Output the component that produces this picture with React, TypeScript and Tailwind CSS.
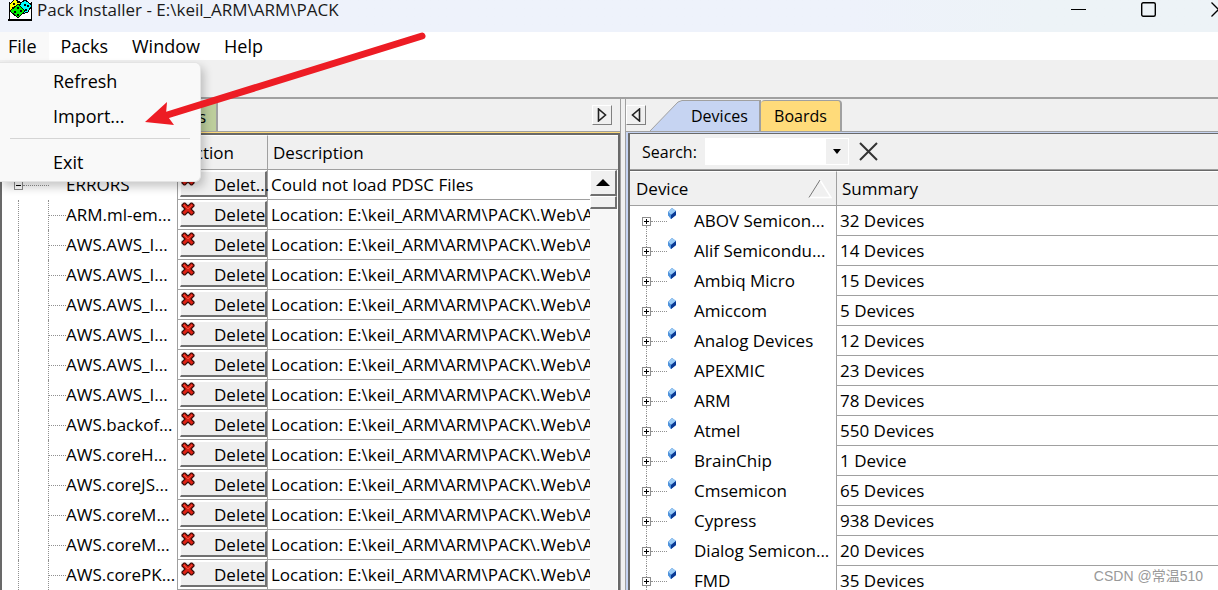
import { clsx } from "clsx";

const packs = [
  { name: "ARM.ml-em..." },
  { name: "AWS.AWS_I..." },
  { name: "AWS.AWS_I..." },
  { name: "AWS.AWS_I..." },
  { name: "AWS.AWS_I..." },
  { name: "AWS.AWS_I..." },
  { name: "AWS.AWS_I..." },
  { name: "AWS.backof..." },
  { name: "AWS.coreH..." },
  { name: "AWS.coreJS..." },
  { name: "AWS.coreM..." },
  { name: "AWS.coreM..." },
  { name: "AWS.corePK..." },
];

const devices = [
  { name: "ABOV Semicon...", summary: "32 Devices" },
  { name: "Alif Semicondu...", summary: "14 Devices" },
  { name: "Ambiq Micro", summary: "15 Devices" },
  { name: "Amiccom", summary: "5 Devices" },
  { name: "Analog Devices", summary: "12 Devices" },
  { name: "APEXMIC", summary: "23 Devices" },
  { name: "ARM", summary: "78 Devices" },
  { name: "Atmel", summary: "550 Devices" },
  { name: "BrainChip", summary: "1 Device" },
  { name: "Cmsemicon", summary: "65 Devices" },
  { name: "Cypress", summary: "938 Devices" },
  { name: "Dialog Semicon...", summary: "20 Devices" },
  { name: "FMD", summary: "35 Devices" },
];

function DiceIcon() {
  return (
    <svg width="24" height="21" viewBox="0 0 24 21" shapeRendering="crispEdges" aria-hidden="true">
      <path d="M1 2v17h22V2" fill="#fff" stroke="#000" />
      <path d="M0 19h24v2H0z" fill="#000" />
      <path d="M2 4 7-1l6 4-1 6-8 4-3-5z" fill="#ff0" stroke="#000" />
      <path d="M13 3 17 0l7 5-4 7-6 2-5-5z" fill="#0ff" stroke="#000" />
      <path d="M2 11 10 4l7 7-7 7z" fill="#0e0" stroke="#000" />
      <path
        d="M5 3h2v2H5zM9 1h2v2H9zM4 7h2v2H4zM16 4h2v2h-2zM19 5h2v2h-2zM17 9h2v2h-2zM9 7h2v2H9zM6 11h2v2H6zM12 10h2v2h-2zM9 14h2v2H9z"
        fill="#000"
      />
    </svg>
  );
}

function DeleteIcon() {
  return (
    <svg width="14" height="14" viewBox="0 0 14 14" className="shrink-0 self-start" aria-hidden="true">
      <path
        d="M1 3 3 1h1l3 3 3-3h1l2 2v1l-3 3 3 3v1l-2 2h-1l-3-3-3 3H3l-2-2v-1l3-3-3-3z"
        fill="#dd2114"
        stroke="#3a0d0a"
        strokeWidth="1.2"
      />
      <path d="m3 3 4 4 4-4" fill="none" stroke="#f4513e" strokeWidth="1" />
    </svg>
  );
}

function GemIcon() {
  return (
    <svg width="10" height="12" viewBox="0 0 10 12" className="-mt-[14px]" aria-hidden="true">
      <path d="M5 0 9 3v4l-5 4-3-4V4z" fill="#2f74c9" />
      <path d="M5 0 9 3 4 7 1 4z" fill="#9acbf6" />
      <path d="M1 4l3 3v4L1 7z" fill="#4f94dd" />
      <path d="M9 3v4l-5 4V7z" fill="#0b3a94" />
    </svg>
  );
}

function ExpandBox({ open = false }: { open?: boolean }) {
  return (
    <svg width="9" height="9" viewBox="0 0 9 9" shapeRendering="crispEdges" aria-hidden="true">
      <path d="M.5.5h8v8h-8z" fill="#fff" stroke="#8c8c8c" />
      <path d={open ? "M2 4.5h5" : "M2 4.5h5M4.5 2v5"} stroke="#000" />
    </svg>
  );
}

function ScrollTab({ dir }: { dir: "left" | "right" }) {
  return (
    <button
      type="button"
      aria-label={dir === "left" ? "Scroll tabs left" : "Scroll tabs right"}
      className="flex size-5 items-center justify-center border-t border-l border-r border-b border-t-white border-l-white border-r-[#808080] border-b-[#808080]"
    >
      <svg width="10" height="14" viewBox="0 0 10 14" fill="none" stroke="#222" strokeWidth="1.6">
        <path d={dir === "left" ? "M8.5 1v12L1.5 7z" : "M1.5 1v12L8.5 7z"} />
      </svg>
    </button>
  );
}

function DeleteButton({ label }: { label: string }) {
  return (
    <button
      type="button"
      className="flex h-[26px] w-full items-end gap-[19px] border-t border-r-2 border-b-2 border-l border-t-white border-l-white border-r-[#707070] border-b-[#707070] bg-[#efefef] leading-5"
    >
      <DeleteIcon />
      <span className="whitespace-nowrap">{label}</span>
    </button>
  );
}

function TitleBar() {
  return (
    <header className="flex h-8 shrink-0 items-start justify-between overflow-hidden bg-gradient-to-r from-[#eef2fb] from-70% to-[#edf3f7] to-85% pl-2">
      <div className="flex gap-[5px]">
        <DiceIcon />
        <h1 className="text-[17px] leading-5 whitespace-nowrap text-[#1a1a1a]">
          Pack Installer - E:\keil_ARM\ARM\PACK
        </h1>
      </div>
      <div className="-mr-2 flex gap-[55px] pt-0.5">
        <button type="button" aria-label="Minimize">
          <svg width="15" height="15" viewBox="0 0 15 15" stroke="#000">
            <path d="M0 7.5h15" />
          </svg>
        </button>
        <button type="button" aria-label="Maximize">
          <svg width="15" height="15" viewBox="0 0 15 15" fill="none" stroke="#000" strokeWidth="1.4">
            <rect x=".7" y=".7" width="13.6" height="13.6" rx="1.5" />
          </svg>
        </button>
        <button type="button" aria-label="Close">
          <svg width="15" height="15" viewBox="0 0 15 15" stroke="#000" strokeWidth="1.3">
            <path d="m.5.5 14 14M14.500.5l-14 14" />
          </svg>
        </button>
      </div>
    </header>
  );
}

function MenuBar() {
  return (
    <nav className="relative z-20 flex h-7 shrink-0 bg-white text-lg leading-7">
      <button type="button" aria-expanded="true" className="bg-[#f9f9f9] pr-3 pl-2">
        File
      </button>
      {["Packs", "Window", "Help"].map((item) => (
        <button type="button" key={item} className="px-3">
          {item}
        </button>
      ))}

      {/* File menu */}
      <div
        role="menu"
        className="absolute top-[30px] left-0 flex w-[201px] flex-col rounded-r-md border border-l-0 border-[#e4e4e4] bg-[#f9f9f9] pb-0.5 shadow-[3px_5px_10px_rgba(0,0,0,0.22)]"
      >
        <button type="button" role="menuitem" className="h-[35px] pl-[53px] text-left">
          Refresh
        </button>
        <button type="button" role="menuitem" className="h-[35px] pl-[53px] text-left">
          Import...
        </button>
        <hr className="mx-[10px] my-[5px] border-[#d5d5d5]" />
        <button type="button" role="menuitem" className="h-[35px] pl-[53px] text-left">
          Exit
        </button>
      </div>
    </nav>
  );
}

function PacksPane() {
  return (
    <section className="flex min-w-0 flex-col border-r border-[#a0a0a0]">
      <div className="flex h-8 shrink-0 items-end justify-between pr-2">
        <div className="flex text-base">
          <button type="button" aria-label="Packs" className="h-[29px] w-24 border-r-2 border-[#a0a0a0] bg-[#ffdb7a]" />
          <button type="button" className="h-[29px] w-[122px] border-r-2 border-[#a0a0a0] bg-[#bccd9c] pr-[10px] text-right">
            Examples
          </button>
        </div>
        <div className="self-center">
          <ScrollTab dir="right" />
        </div>
      </div>

      <div className="border-t border-[#a0a0a0]">
        <div className="h-px bg-[#ffdb7a]" />
      </div>
      <div className="relative min-h-0 flex-1 overflow-hidden border-t-2 border-r-2 border-l-2 border-[#696969] bg-white">
        <table className="w-full table-fixed border-separate border-spacing-0">
          <colgroup>
            <col className="w-[176px]" />
            <col className="w-[90px]" />
            <col />
          </colgroup>
          <thead>
            <tr className="h-[35px] bg-[#f0f0f0] text-left">
              <th className="border-t border-r border-b border-t-white border-r-[#a0a0a0] border-b-[#a0a0a0] pl-1 font-normal">Pack</th>
              <th className="border-t border-r border-b border-t-white border-r-[#a0a0a0] border-b-[#a0a0a0] pl-1.5 font-normal">Action</th>
              <th className="border-t border-b border-t-white border-b-[#a0a0a0] pl-[5px] font-normal">Description</th>
            </tr>
          </thead>
          <tbody>
            <tr className="h-[30px]">
              <td className="border-r border-[#a0a0a0] p-0">
                <div className="flex h-[29px] items-center pl-3">
                  <ExpandBox open />
                  <span className="w-[26px] border-t border-dotted border-[#909090]" />
                  <span className="pl-[17px]">ERRORS</span>
                </div>
              </td>
              <td className="border-r border-b border-[#a0a0a0] pt-px pr-0 pb-0 pl-0.5 align-top">
                <DeleteButton label="Delet..." />
              </td>
              <td className="border-b border-[#a0a0a0] py-0 pl-[3px] whitespace-nowrap">
                Could not load PDSC Files
              </td>
            </tr>
            {packs.map((pack, index) => (
              <tr key={index} className="h-[30px]">
                <td className="border-r border-[#a0a0a0] p-0">
                  <div className="flex h-[30px] items-center pl-4">
                    <span className="h-full w-[30px] border-l border-dotted border-[#909090]" />
                    <span className="h-full border-l border-dotted border-[#909090]" />
                    <span className="w-[17px] border-t border-dotted border-[#909090]" />
                    <span className="whitespace-nowrap">{pack.name}</span>
                  </div>
                </td>
                <td className="border-r border-b border-[#a0a0a0] pt-px pr-0 pb-0 pl-0.5 align-top">
                  <DeleteButton label="Delete" />
                </td>
                <td className="overflow-hidden border-b border-[#a0a0a0] py-0 pl-[3px] whitespace-nowrap">
                  Location: E:\keil_ARM\ARM\PACK\.Web\ARM
                </td>
              </tr>
            ))}
          </tbody>
        </table>

        {/* Scrollbar lies over the right end of the rows */}
        <div className="absolute top-[35px] right-0 bottom-0 flex w-7 flex-col border-r border-white bg-[#f7f7f7]">
          <button
            type="button"
            aria-label="Scroll up"
            className="flex h-[26px] items-center justify-center border-t border-r-2 border-b-2 border-l border-t-white border-l-white border-r-[#707070] border-b-[#707070] bg-[#f0f0f0]"
          >
            <svg width="14" height="7" viewBox="0 0 14 7">
              <path d="M7 0l7 7H0z" />
            </svg>
          </button>
          <div className="h-[13px] border-t border-r-2 border-b-2 border-l border-t-white border-l-white border-r-[#707070] border-b-[#707070] bg-[#f0f0f0]" />
        </div>
      </div>
    </section>
  );
}

function DevicesPane() {
  return (
    <section className="ml-1 flex min-w-0 flex-col border-l border-[#a0a0a0]">
      <div className="flex h-8 shrink-0 items-end">
        <div className="self-center">
          <ScrollTab dir="left" />
        </div>
        <div className="flex h-[31px] pl-1 text-base">
          <svg width="32" height="31" viewBox="0 0 32 31" aria-hidden="true">
            <path d="M0 31 28 2l4-1.500V31z" fill="#c6d4f2" />
            <path d="M0 31 28 2l4-1.500" fill="none" stroke="#a0a0a0" />
          </svg>
          <button type="button" className="w-[79px] border-t border-r-2 border-[#a0a0a0] bg-[#c6d4f2] pl-[9px] text-left">
            Devices
          </button>
          <button type="button" className="w-[81px] rounded-t border-t border-r-2 border-[#a0a0a0] bg-[#ffdb7a]">
            Boards
          </button>
        </div>
      </div>

      <div className="flex min-h-0 flex-1 flex-col border-t border-[#a0a0a0]">
        <div className="flex min-h-0 flex-1 flex-col bg-[#c6d4f2] pt-px pl-0.5">
          <div className="flex min-h-0 flex-1 flex-col border-t border-l-2 border-[#696969] bg-[#f0f0f0]">
            <div className="flex h-[35px] shrink-0 items-center pl-3 text-base">
              <label htmlFor="device-search" className="pr-2">
                Search:
              </label>
              <input id="device-search" type="text" className="h-[27px] w-[121px] bg-white px-1 outline-none" />
              <button
                type="button"
                aria-label="Show search history"
                className="flex h-[27px] w-[23px] items-center justify-center border border-l-0 border-white"
              >
                <svg width="8" height="5" viewBox="0 0 8 5">
                  <path d="M0 0h8L4 5z" />
                </svg>
              </button>
              <button type="button" aria-label="Clear search" className="ml-[10px]">
                <svg width="19" height="19" viewBox="0 0 19 19" stroke="#333" strokeWidth="2">
                  <path d="m1 1 17 17M18 1 1 18" />
                </svg>
              </button>
            </div>

            <div className="min-h-0 flex-1 overflow-hidden border-t border-[#a0a0a0] bg-white">
              <table className="w-full table-fixed border-separate border-spacing-0 border-t border-[#696969]">
                <colgroup>
                  <col className="w-[207px]" />
                  <col />
                </colgroup>
                <thead>
                  <tr className="h-[35px] bg-[#f0f0f0] text-left">
                    <th className="border-t border-r border-b border-t-white border-r-[#a0a0a0] border-b-[#a0a0a0] py-0 pr-1 pl-[6px] font-normal">
                      <div className="flex items-center justify-between">
                        Device
                        <svg width="24" height="20" viewBox="0 0 24 20" fill="none">
                          <path d="M1 18.500h22L12 1" stroke="#fff" strokeWidth="1.5" />
                          <path d="M1 18.500 12 1" stroke="#777" />
                        </svg>
                      </div>
                    </th>
                    <th className="border-t border-b border-t-white border-b-[#a0a0a0] py-0 pl-[5px] font-normal">Summary</th>
                  </tr>
                </thead>
                <tbody>
                  {devices.map((device, index) => (
                    <tr key={device.name} className="h-[30px]">
                      <td className="border-r border-[#a0a0a0] p-0">
                        <div className="flex h-[30px] items-center pl-3">
                          <span className="flex h-full w-[9px] flex-col items-center">
                            <span className={clsx("flex-1 border-l border-dotted", index === 0 ? "border-transparent" : "border-[#909090]")} />
                            <ExpandBox />
                            <span className="flex-1 border-l border-dotted border-[#909090]" />
                          </span>
                          <span className="w-4 border-t border-dotted border-[#909090]" />
                          <GemIcon />
                          <span className="pl-[17px] whitespace-nowrap">{device.name}</span>
                        </div>
                      </td>
                      <td className="border-b border-[#a0a0a0] py-0 pl-[3px]">{device.summary}</td>
                    </tr>
                  ))}
                </tbody>
              </table>
            </div>
          </div>
        </div>
      </div>
    </section>
  );
}

export default function App() {
  return (
    <div className="relative flex h-screen flex-col overflow-hidden bg-[#f0f0f0] font-['Open_Sans','Noto_Sans_CJK_SC',sans-serif] text-[17px] leading-6 text-black">
      <TitleBar />
      <MenuBar />
      <div className="h-[37px] shrink-0" />
      <main className="grid min-h-0 flex-1 grid-cols-[621fr_597fr] grid-rows-[minmax(0,1fr)] border-t-2 border-[#a0a0a0]">
        <PacksPane />
        <DevicesPane />
      </main>

      {/* Arrow pointing at Import... */}
      <svg
        width="284"
        height="96"
        viewBox="0 0 284 96"
        className="pointer-events-none absolute top-8 left-[144px] z-30"
        aria-hidden="true"
      >
        <path d="M20 84 278 4" stroke="#ed1c24" strokeWidth="7" strokeLinecap="round" />
        <path d="M1 90 23 70 22 82 30 93z" fill="#ed1c24" />
      </svg>

      <p className="absolute right-[15px] bottom-1 font-['Liberation_Sans','Noto_Sans_CJK_SC',sans-serif] text-sm text-[#999]">
        CSDN @常温510
      </p>
    </div>
  );
}
